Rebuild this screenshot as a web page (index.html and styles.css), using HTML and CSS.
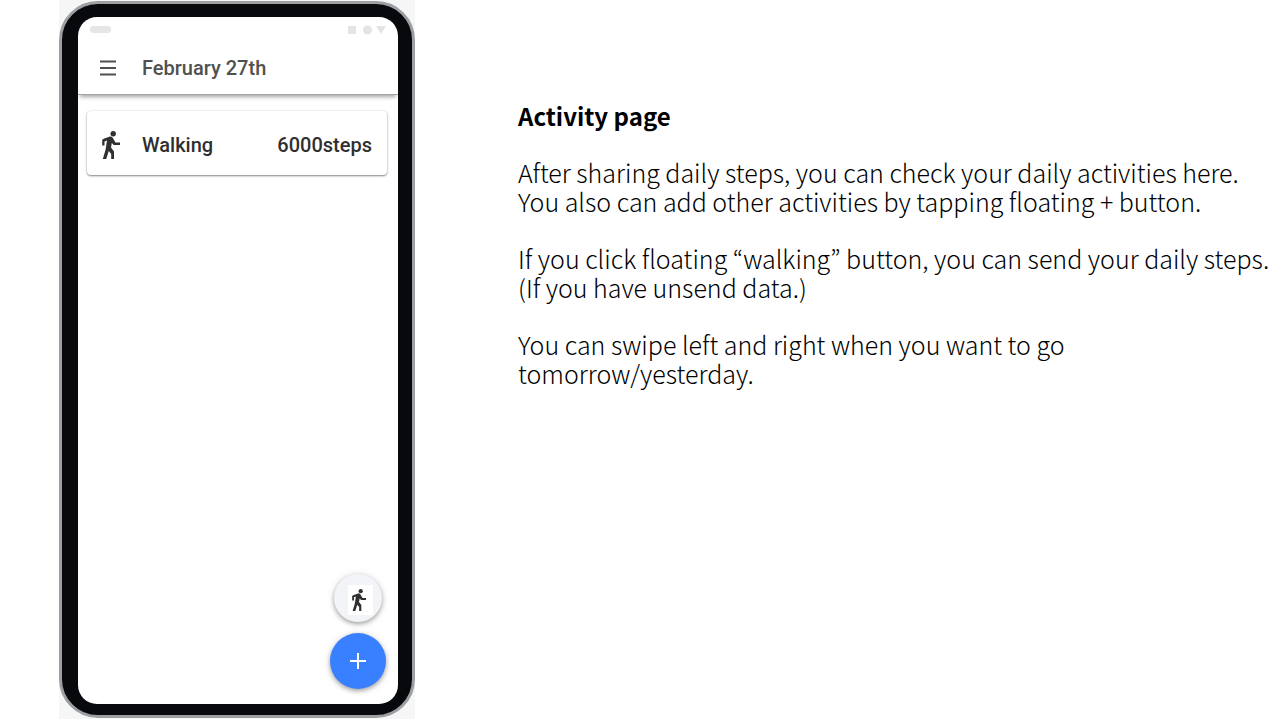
FILE: index.html
```
<!DOCTYPE html>
<html lang="en">
<head>
<meta charset="utf-8">
<meta name="viewport" content="width=device-width, initial-scale=1">
<title>Activity page</title>
<link rel="stylesheet" href="styles.css">
</head>
<body>
<svg class="symbols" aria-hidden="true">
  <symbol id="walk" viewBox="0 0 18 28">
    <circle cx="11.200" cy="2.700" r="2.700"/>
    <path d="M8 5.500 2.200 7.500 .2 8.800V14.500h2.300v-4l2.500-1-1.500 9.500L.8 28h3.400l2.600-8 2.400 3V28H12v-7.500L9 16.500l.8-4.500 2 2H18v-2.600h-4.500l-2.600-4.500Q9.500 5.200 8 5.500z"/>
  </symbol>
</svg>
<div class="page">
  <div class="backdrop">
    <div class="phone">
      <div class="screen">
        <div class="status">
          <span class="pill"></span>
          <svg class="signals" viewBox="0 0 38 10" aria-hidden="true"><path d="M0 1h8v8H0z"/><circle cx="19.500" cy="5" r="4.500"/><path d="M28 1h10l-5 8z"/></svg>
        </div>
        <header class="bar">
          <button class="menu" type="button" aria-label="Menu"><svg viewBox="0 0 16 16" aria-hidden="true"><path d="M0 1.500h16M0 8h16M0 14.500h16"/></svg></button>
          <h1 class="date">February 27th</h1>
        </header>
        <main class="content">
          <article class="card">
            <svg class="walk" aria-hidden="true"><use href="#walk"/></svg>
            <span class="name">Walking</span>
            <span class="steps">6000steps</span>
          </article>
        </main>
        <div class="actions">
          <button class="fab fab-small" type="button" aria-label="Send walking steps"><span class="tile"><svg class="walk-small" aria-hidden="true"><use href="#walk"/></svg></span></button>
          <button class="fab fab-add" type="button" aria-label="Add activity"><svg viewBox="0 0 16 16" aria-hidden="true"><path d="M8 0v16M0 8h16"/></svg></button>
        </div>
      </div>
    </div>
  </div>
  <section class="notes">
    <h2>Activity page</h2>
    <p>After sharing daily steps, you can check your daily activities here.<br>You also can add other activities by tapping floating + button.</p>
    <p>If you click floating “walking” button, you can send your daily steps.<br>(If you have unsend data.)</p>
    <p>You can swipe left and right when you want to go<br>tomorrow/yesterday.</p>
  </section>
</div>
</body>
</html>
```
FILE: styles.css
```
* { box-sizing: border-box; }
body { margin: 0; background: #fff; font-family: Roboto, sans-serif; }
button { border: 0; padding: 0; background: none; font: inherit; cursor: pointer; }
.symbols { position: absolute; width: 0; height: 0; }

.page { display: flex; align-items: stretch; gap: 103px; min-height: 100vh; padding-left: 59px; }
.backdrop { flex: none; display: flex; width: 356px; padding: 1px 0; background: #f6f6f6; }
.phone { flex: 1; display: flex; padding: 13px 14px 11px 16px; border: 3px solid #9ca0a3; border-radius: 39px; background: #07090d; }
.screen { position: relative; flex: 1; display: flex; flex-direction: column; border-radius: 19px; background: #fff; overflow: hidden; }

.status { display: flex; justify-content: space-between; align-items: center; height: 25px; padding: 0 12px; }
.pill { width: 21px; height: 7px; border-radius: 4px; background: #e6e6e6; }
.signals { width: 38px; height: 10px; fill: #e4e4e4; }

.bar { display: flex; align-items: center; gap: 26px; height: 53px; padding: 0 22px; border-bottom: 1px solid #a4a4a4; box-shadow: 0 4px 4px -2px rgba(0, 0, 0, .35); }
.menu { display: flex; width: 16px; height: 16px; }
.menu svg { width: 16px; height: 16px; stroke: #505050; stroke-width: 2; }
.date { margin: 0; color: #505050; font-size: 20px; line-height: 24px; font-weight: 500; }

.content { padding: 16px 11px 0 9px; }
.card { display: flex; align-items: center; height: 64px; padding: 3px 15px 0; border-radius: 4px; box-shadow: 0 1px 2px rgba(0, 0, 0, .45), 0 0 3px rgba(0, 0, 0, .1); color: #2f2f2f; font-size: 20px; line-height: 24px; font-weight: 500; }
.walk { width: 18px; height: 28px; fill: #303030; }
.name { margin-left: 22px; }
.steps { margin-left: auto; }

.actions { position: absolute; right: 12px; bottom: 15px; display: flex; flex-direction: column; align-items: center; gap: 11px; }
.fab { display: flex; align-items: center; justify-content: center; border-radius: 50%; box-shadow: 0 2px 4px rgba(0, 0, 0, .3), 0 1px 8px rgba(0, 0, 0, .12); }
.fab-small { width: 48px; height: 48px; padding: 4px 0 0 4px; background: #f3f4f8; }
.tile { display: flex; align-items: center; width: 25px; height: 30px; padding-left: 4px; background: #fff; }
.walk-small { width: 14px; height: 22px; fill: #303030; }
.fab-add { width: 56px; height: 56px; background: #3880ff; }
.fab-add svg { width: 16px; height: 16px; stroke: #fff; stroke-width: 2; }

.notes { flex: 1; min-width: 0; padding-top: 101px; color: #000; font-family: "Noto Sans CJK JP", sans-serif; font-size: 25px; line-height: 29px; font-weight: 300; }
.notes h2 { margin: 0 0 28px; font-size: 24px; line-height: 29px; font-weight: 700; }
.notes p { margin: 0 0 28px; }
```
